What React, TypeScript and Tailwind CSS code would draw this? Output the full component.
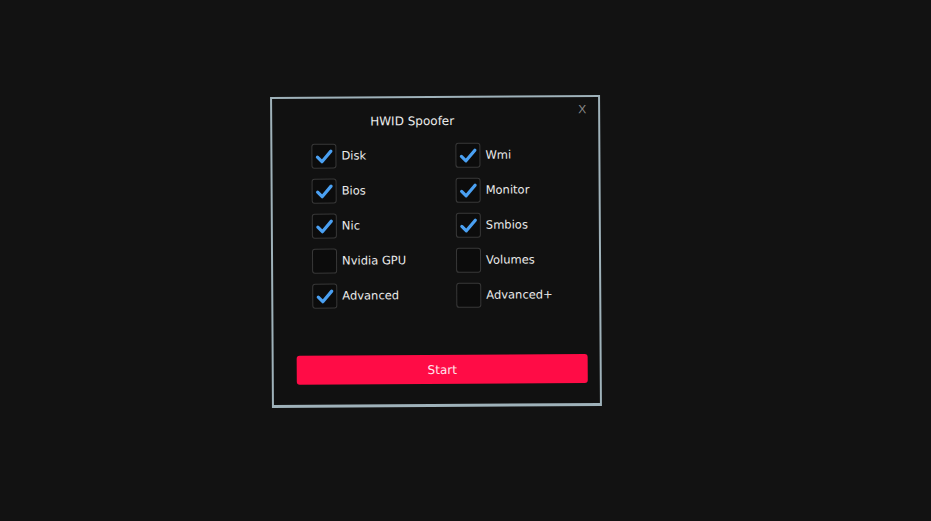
const OPTIONS: { left: [string, boolean]; right: [string, boolean] }[] = [
  { left: ['Disk', true], right: ['Wmi', true] },
  { left: ['Bios', true], right: ['Monitor', true] },
  { left: ['Nic', true], right: ['Smbios', true] },
  { left: ['Nvidia GPU', false], right: ['Volumes', false] },
  { left: ['Advanced', true], right: ['Advanced+', false] },
]

function Check({ label, checked }: { label: string; checked: boolean }) {
  return (
    <div className="flex items-center gap-[5px]">
      <div className="w-[25px] h-[25px] rounded-[3px] border-[1.5px] border-[#383838] bg-[#0c0c0c] flex items-center justify-center">
        {checked && (
          <svg width="19" height="19" viewBox="0 0 19 19" fill="none">
            <path d="M3 10.5 L7.5 15 L16.5 4.5" stroke="#4aa0f2" strokeWidth="3.2" strokeLinecap="round" strokeLinejoin="round" />
          </svg>
        )}
      </div>
      <span className="text-[11.5px] text-[#ebebeb]">{label}</span>
    </div>
  )
}

export default function App() {
  return (
    <div className="min-h-[521px] w-full bg-[#121212] pt-[96px] pl-[271px]" style={{ fontFamily: '"DejaVu Sans", Verdana, sans-serif' }}>
      <div className="w-[330px] h-[311px] border-2 border-b-[3px] border-[#9fb2ba] bg-[#111111] -rotate-[0.35deg] flex flex-col">
        <div className="relative h-[45px]">
          <span className="absolute left-[98px] top-[14px] text-[12px] text-[#ececec]">HWID Spoofer</span>
          <span className="absolute right-[12px] top-[3px] text-[12px] text-[#8a8a8a]" style={{ fontFamily: '"Liberation Sans", Arial, sans-serif' }}>X</span>
        </div>
        <div className="flex flex-col gap-[10px] pl-[39px]">
          {OPTIONS.map((r) => (
            <div key={r.left[0]} className="grid grid-cols-[144px_1fr]">
              <Check label={r.left[0]} checked={r.left[1]} />
              <Check label={r.right[0]} checked={r.right[1]} />
            </div>
          ))}
        </div>
        <div className="mt-auto mb-[20px] ml-[23px] mr-[12px]">
          <button className="w-full h-[29px] rounded-[3px] bg-[#ff0c46] text-[#ffe6ec] text-[12px] flex items-center justify-center">
            Start
          </button>
        </div>
      </div>
    </div>
  )
}
